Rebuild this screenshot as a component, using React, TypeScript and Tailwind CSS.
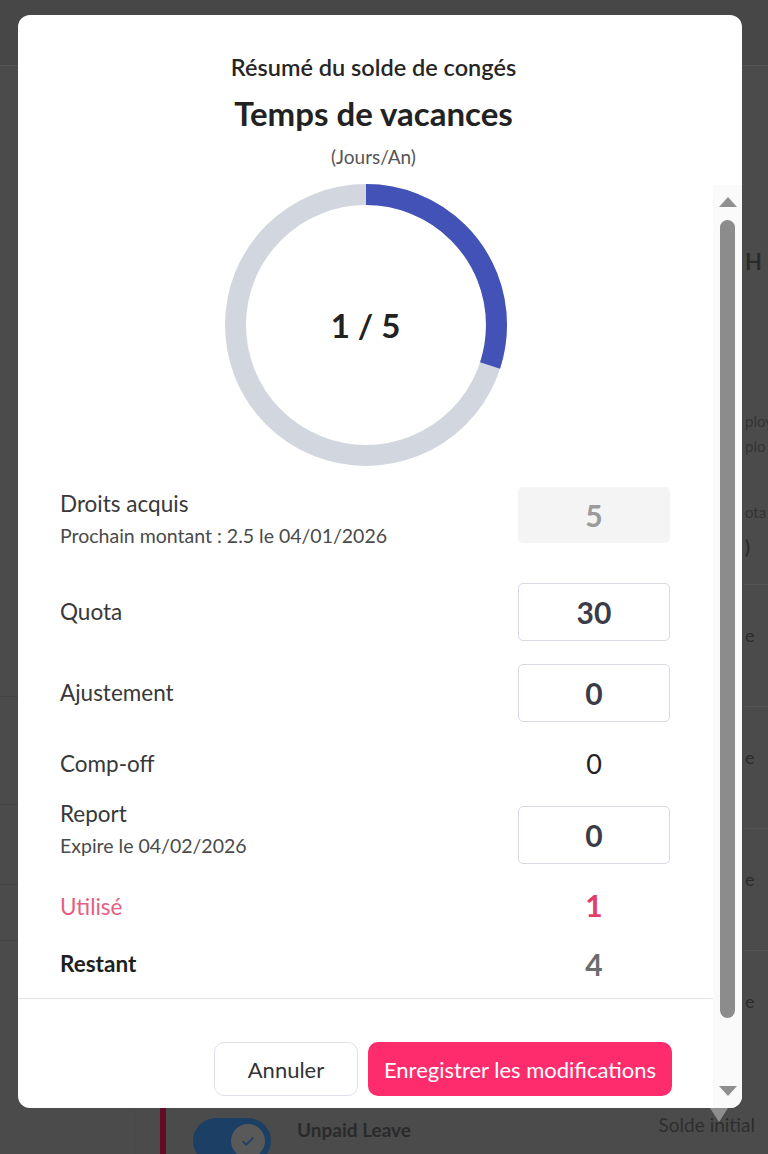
import React from "react";

const FONT = "font-['Lato','Roboto','Liberation_Sans',sans-serif]";

const Donut = ({ used, total }: { used: number; total: number }) => {
  const r = 130.5;
  const c = 2 * Math.PI * r;
  const frac = 0.3;
  return (
    <div className="relative w-[284px] h-[284px]">
      <svg width="284" height="284" viewBox="0 0 284 284">
        <circle cx="142" cy="142" r={r} fill="none" stroke="#d2d6df" strokeWidth="21" />
        <circle
          cx="142"
          cy="142"
          r={r}
          fill="none"
          stroke="#4252b6"
          strokeWidth="21"
          strokeDasharray={`${c * frac} ${c}`}
          transform="rotate(-90 142 142)"
        />
      </svg>
      <div className="absolute inset-0 flex items-center justify-center">
        <span className="text-[33px] font-bold text-[#222] leading-none">
          {used} / {total}
        </span>
      </div>
    </div>
  );
};

const NumBox = ({ value, disabled }: { value: string; disabled?: boolean }) =>
  disabled ? (
    <div className="w-[152px] h-[56px] rounded-[5px] bg-[#f4f4f4] flex items-center justify-center text-[30px] font-bold text-[#9b9b9b]">
      {value}
    </div>
  ) : (
    <div className="w-[152px] h-[58px] rounded-[5px] border border-[#d7dae3] bg-white flex items-center justify-center text-[30px] font-bold text-[#3a3d48]">
      {value}
    </div>
  );

const Background = () => (
  <div className="flex flex-col h-full">
    <div className="h-[66px] bg-[#474747] border-b border-[#555]" />
    <div className="flex flex-1">
      <div className="w-[135px] flex flex-col border-r border-[#474747]">
        <div className="h-[631px] border-b border-[#444]" />
        <div className="h-[108px] border-b border-[#444]" />
        <div className="h-[80px] border-b border-[#444]" />
        <div className="h-[56px] border-b border-[#444]" />
      </div>
      <div className="flex-1 flex flex-col">
        <div className="flex-1" />
        <div className="h-[46px] flex">
          <div className="ml-[25px] w-[6px] bg-[#650b25]" />
          <div className="ml-[27px] mt-[10px] w-[78px] h-[46px] rounded-full bg-[#1c3f66] flex items-center justify-end pr-[6px]">
            <div className="w-[34px] h-[34px] rounded-full bg-[#595959] flex items-center justify-center">
              <svg width="18" height="18" viewBox="0 0 24 24" fill="none" stroke="#1c3f66" strokeWidth="2.4">
                <path d="M5 12.5l4.5 4.5L19 7.5" />
              </svg>
            </div>
          </div>
          <span className="ml-[26px] mt-[8px] text-[19px] font-bold text-[#2a2a2a] whitespace-nowrap">
            Unpaid Leave
          </span>
          <div className="ml-auto mt-[3px] flex flex-col items-center mr-[-10px]">
            <span className="text-[19px] text-[#2e2e2e] whitespace-nowrap">Solde initial</span>
          </div>
        </div>
      </div>
      <div className="w-[23px] flex flex-col text-[#2b2b2b] whitespace-nowrap">
        <span className="mt-[183px] text-[22px] font-bold leading-[26px]">H</span>
        <span className="mt-[136px] text-[15px] leading-[20px] text-[#333]">ploy</span>
        <span className="mt-[5px] text-[15px] leading-[20px] text-[#333]">plo</span>
        <span className="mt-[46px] text-[15px] leading-[20px] text-[#333]">ota</span>
        <span className="mt-[15px] text-[18px] font-bold leading-[20px]">)</span>
        <div className="mt-[27px] h-[122px] border-t border-[#555] pt-[39px] text-[18px] leading-[22px]">e</div>
        <div className="h-[122px] border-t border-[#555] pt-[39px] text-[18px] leading-[22px]">e</div>
        <div className="h-[122px] border-t border-[#555] pt-[39px] text-[18px] leading-[22px]">e</div>
        <div className="h-[122px] border-t border-[#555] pt-[39px] text-[18px] leading-[22px]">e</div>
      </div>
    </div>
  </div>
);

export default function App() {
  return (
    <div className={`relative w-[768px] h-[1154px] overflow-hidden bg-[#4b4b4b] ${FONT}`}>
      <Background />
      {/* tooltip arrow peeking below the modal */}
      <div className="absolute left-[710px] top-[1108px] w-0 h-0 border-l-[9px] border-r-[9px] border-t-[14px] border-l-transparent border-r-transparent border-t-[#8e8e8e]" />

      <div className="absolute left-[18px] top-[15px] w-[724px] h-[1093px] bg-white rounded-[12px] overflow-hidden flex flex-col">
        <div className="pr-[13px] pt-[40px] flex flex-col items-center text-center">
          <h2 className="text-[23.5px] leading-[24px] font-semibold text-[#262626]">
            Résumé du solde de congés
          </h2>
          <h1 className="mt-[17px] text-[33px] leading-[34px] font-bold text-[#222]">
            Temps de vacances
          </h1>
          <p className="mt-[17px] text-[19px] leading-[20px] text-[#555]">(Jours/An)</p>
        </div>

        <div className="flex flex-1 min-h-0">
          <div className="flex-1 flex flex-col">
            <div className="mt-[16px] flex justify-center">
              <Donut used={1} total={5} />
            </div>

            <div className="pl-[42px] pr-[43px] flex flex-col">
              <div className="mt-[20px] h-[56px] flex items-start justify-between">
                <div className="pt-[5px] flex flex-col">
                  <span className="text-[22.5px] leading-[24px] text-[#383838]">Droits acquis</span>
                  <span className="mt-[9px] text-[19.5px] leading-[22px] text-[#4a4a4a]">
                    Prochain montant : 2.5 le 04/01/2026
                  </span>
                </div>
                <NumBox value="5" disabled />
              </div>

              <div className="mt-[40px] flex items-center justify-between">
                <span className="text-[22.5px] leading-[24px] text-[#383838]">Quota</span>
                <NumBox value="30" />
              </div>

              <div className="mt-[23px] flex items-center justify-between">
                <span className="text-[22.5px] leading-[24px] text-[#383838]">Ajustement</span>
                <NumBox value="0" />
              </div>

              <div className="mt-[27px] h-[30px] flex items-center justify-between">
                <span className="text-[22.5px] leading-[24px] text-[#383838]">Comp-off</span>
                <span className="w-[152px] text-center text-[27px] text-[#222]">0</span>
              </div>

              <div className="mt-[23px] flex items-start justify-between">
                <div className="flex flex-col">
                  <span className="text-[22.5px] leading-[24px] text-[#383838]">Report</span>
                  <span className="mt-[9px] text-[19.5px] leading-[22px] text-[#4a4a4a]">
                    Expire le 04/02/2026
                  </span>
                </div>
                <div className="mt-[4px]">
                  <NumBox value="0" />
                </div>
              </div>

              <div className="mt-[28px] h-[30px] flex items-center justify-between">
                <span className="text-[22.5px] leading-[24px] text-[#e5607f]">Utilisé</span>
                <span className="w-[152px] text-center text-[30px] font-bold text-[#e43d69] -mt-[3px]">1</span>
              </div>

              <div className="mt-[27px] h-[30px] flex items-center justify-between">
                <span className="text-[22.5px] leading-[24px] font-bold text-[#1f1f1f]">Restant</span>
                <span className="w-[152px] text-center text-[30px] font-bold text-[#6c6c6c]">4</span>
              </div>
            </div>

            <div className="mt-[19px] border-t border-[#e3e5ec]" />

            <div className="mt-[43px] pr-[41px] flex justify-end gap-[10px]">
              <button className="w-[144px] h-[54px] rounded-[10px] border border-[#dfe1ea] bg-white text-[22px] text-[#333]">
                Annuler
              </button>
              <button className="w-[304px] h-[54px] rounded-[10px] bg-[#fe2c6d] text-[22px] text-white">
                Enregistrer les modifications
              </button>
            </div>
          </div>

          {/* scrollbar */}
          <div className="w-[29px] flex flex-col items-center">
            <div className="mt-[18px] flex-1 w-full bg-[#fafafa] flex flex-col items-center">
              <div className="mt-[12px] w-0 h-0 border-l-[9px] border-r-[9px] border-b-[10px] border-l-transparent border-r-transparent border-b-[#8f8f8f]" />
              <div className="mt-[13px] w-[15px] h-[798px] rounded-full bg-[#8c8c8c]" />
              <div className="mt-[68px] w-0 h-0 border-l-[9px] border-r-[9px] border-t-[10px] border-l-transparent border-r-transparent border-t-[#8f8f8f]" />
            </div>
          </div>
        </div>
      </div>
    </div>
  );
}
